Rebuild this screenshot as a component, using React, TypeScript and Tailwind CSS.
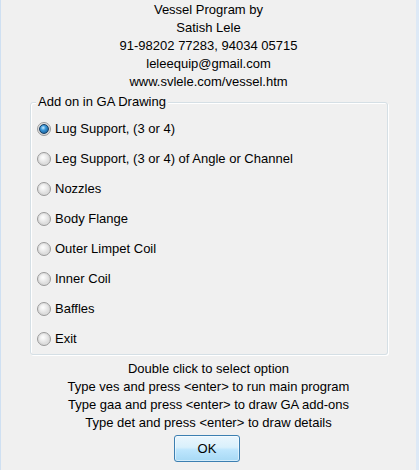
import { useState } from 'react'

const options = [
    'Lug Support, (3 or 4)',
    'Leg Support, (3 or 4) of Angle or Channel',
    'Nozzles',
    'Body Flange',
    'Outer Limpet Coil',
    'Inner Coil',
    'Baffles',
    'Exit',
]

function Radio({ checked }: { checked: boolean }) {
    return (
        <span className="w-[14px] h-[14px] rounded-full border border-[#9a9a9a] bg-[radial-gradient(circle_at_60%_65%,#f4f4f4_0%,#d4d4d4_45%,#f2f2f2_100%)] flex items-center justify-center shrink-0">
            {checked ? (
                <span className="w-[10px] h-[10px] rounded-full border border-[#173e63] bg-[radial-gradient(circle_at_40%_35%,#c8ecff_0%,#3a98da_35%,#0d4c85_100%)]" />
            ) : (
                <span className="w-[10px] h-[10px] rounded-full bg-[radial-gradient(circle_at_40%_35%,#ffffff_0%,#e2e2e2_60%,#cfcfcf_100%)]" />
            )}
        </span>
    )
}

export default function App() {
    const [selected, setSelected] = useState(0)

    return (
        <div className="w-[419px] h-[470px] bg-[#f0f0f0] border-l border-l-[#cfe0f2] border-r-[3px] border-r-[#dde9f6] text-[13px] text-black font-['Liberation_Sans',Arial,sans-serif] leading-[18px] flex flex-col">
            {/* Header */}
            <div className="flex flex-col items-center pt-[1px]">
                <div>Vessel Program by</div>
                <div>Satish Lele</div>
                <div>91-98202 77283, 94034 05715</div>
                <div>leleequip@gmail.com</div>
                <div>www.svlele.com/vessel.htm</div>
            </div>

            {/* Group box */}
            <div className="relative mx-[29px] mt-[11px] h-[253px] w-[358px] rounded-[3px] border border-[#d5dfe5] shadow-[inset_1px_1px_0_#ffffff,1px_1px_0_#ffffff]">
                <span className="absolute left-[5px] -top-[10px] bg-[#f0f0f0] px-[2px]">Add on in GA Drawing</span>
                <div className="flex flex-col pt-[11px] pl-[6px]">
                    {options.map((o, i) => (
                        <label
                            key={o}
                            onClick={() => setSelected(i)}
                            className="flex items-center gap-[4px] h-[30px] cursor-default"
                        >
                            <Radio checked={selected === i} />
                            <span>{o}</span>
                        </label>
                    ))}
                </div>
            </div>

            {/* Help text */}
            <div className="flex flex-col items-center mt-[5px]">
                <div>Double click to select option</div>
                <div>Type ves and press &lt;enter&gt; to run main program</div>
                <div>Type gaa and press &lt;enter&gt; to draw GA add-ons</div>
                <div>Type det and press &lt;enter&gt; to draw details</div>
            </div>

            <div className="flex justify-center mt-[3px] pr-[3px]">
                <button className="w-[66px] h-[27px] rounded-[3px] border border-[#3c7fb1] bg-[linear-gradient(#eaf6fd_0%,#d9f0fc_45%,#bee6fd_55%,#a7d9f5_100%)] shadow-[inset_0_0_0_1px_#ffffff80] text-[13px]">
                    OK
                </button>
            </div>
        </div>
    )
}
